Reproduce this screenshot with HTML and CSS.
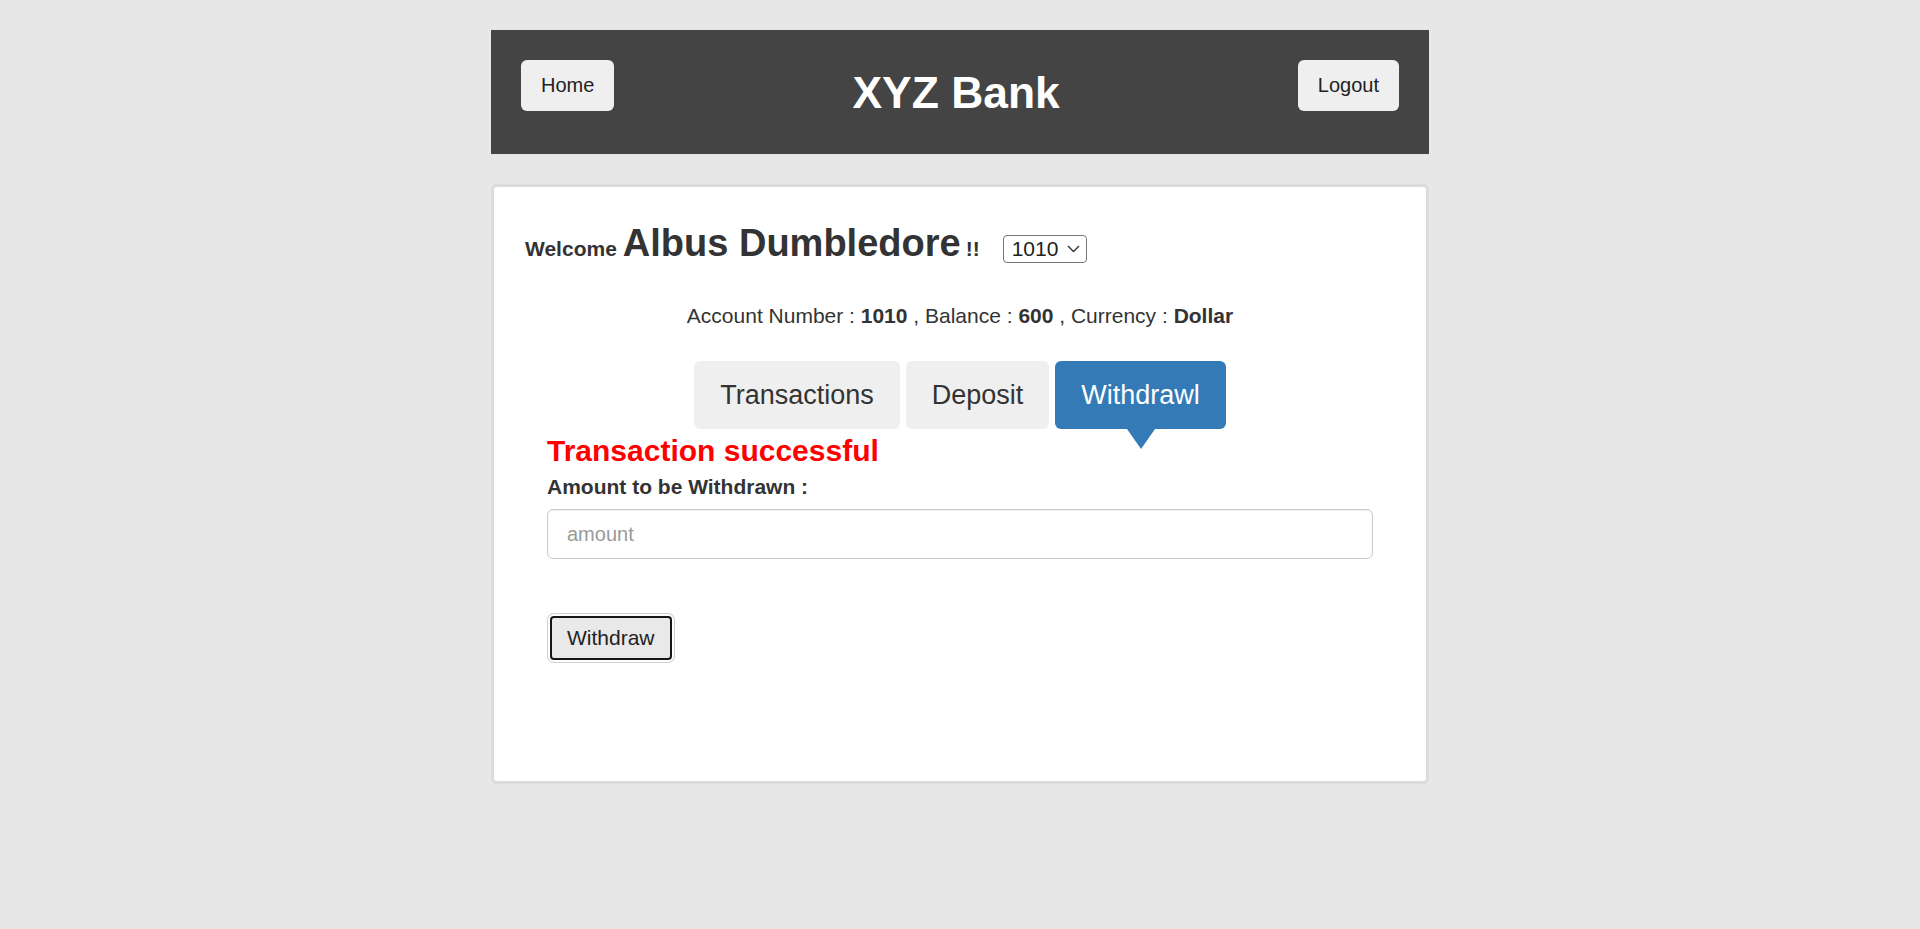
FILE: index.html
```html
<!DOCTYPE html>
<html lang="en">
<head>
<meta charset="utf-8">
<title>XYZ Bank</title>
<link rel="stylesheet" href="styles.css">
</head>
<body>
<div class="page">
  <header class="topbar">
    <button class="btn-light" type="button">Home</button>
    <h1 class="brand">XYZ Bank</h1>
    <button class="btn-light" type="button">Logout</button>
  </header>

  <main class="panel">
    <div class="welcome-row">
      <strong class="welcome">Welcome</strong>
      <strong class="name">Albus Dumbledore</strong>
      <strong class="bang">!!</strong>
      <span class="select-wrap">
        <select class="acct-select"><option>1010</option></select>
        <svg class="chev" width="13" height="8" viewBox="0 0 13 8"><path d="M1 1 L6.5 6.5 L12 1" fill="none" stroke="#333" stroke-width="1.4"/></svg>
      </span>
    </div>

    <div class="acct-info">Account Number : <strong>1010</strong> , Balance : <strong>600</strong> , Currency : <strong>Dollar</strong></div>

    <nav class="tabs">
      <button class="tab" type="button">Transactions</button>
      <button class="tab" type="button">Deposit</button>
      <button class="tab active" type="button">Withdrawl</button>
    </nav>

    <section class="tx">
      <p class="msg">Transaction successful</p>
      <form class="tx-form">
        <label class="tx-label">Amount to be Withdrawn :</label>
        <input class="tx-input" type="number" placeholder="amount">
        <button class="tx-submit" type="button">Withdraw</button>
      </form>
    </section>
  </main>
</div>
</body>
</html>
```

FILE: styles.css
```css
* { box-sizing: border-box; }

html, body {
  margin: 0;
  padding: 0;
  background: #e7e7e7;
  font-family: "Liberation Sans", Arial, sans-serif;
  color: #333;
}

.page {
  width: 938px;
  margin: 30px auto 0;
}

/* ---------- header ---------- */
.topbar {
  background: #444;
  height: 124px;
  padding: 30px 30px 0;
  display: flex;
  align-items: flex-start;
}

.btn-light {
  height: 51px;
  padding: 0 20px;
  border: none;
  border-radius: 6px;
  background: #efefef;
  color: #222;
  font-family: "Liberation Sans", Arial, sans-serif;
  font-size: 20px;
}

.brand {
  flex: 1;
  margin: 7px 0 0;
  text-align: center;
  color: #fff;
  font-size: 44.4px;
  font-weight: bold;
  line-height: 51px;
}

/* ---------- panel ---------- */
.panel {
  margin-top: 30px;
  height: 600px;
  background: #fff;
  border: 3px solid #dcdcdc;
  border-radius: 6px;
  padding: 35px 31px 0;
}

.welcome-row {
  display: flex;
  align-items: baseline;
  line-height: 43px;
}

.welcome {
  font-size: 21px;
  margin-right: 6px;
}

.name {
  font-size: 38px;
}

.bang {
  font-size: 21px;
  margin-left: 5px;
}

.select-wrap {
  position: relative;
  display: inline-flex;
  margin-left: 23px;
}

.acct-select {
  appearance: none;
  -webkit-appearance: none;
  width: 84px;
  height: 28px;
  padding: 0 0 0 8px;
  border: 1px solid #767676;
  border-radius: 4px;
  background: #fff;
  color: #222;
  font-family: "Liberation Sans", Arial, sans-serif;
  font-size: 21px;
  line-height: 26px;
}

.chev {
  position: absolute;
  right: 7px;
  top: 10px;
  pointer-events: none;
}

.acct-info {
  margin-top: 31px;
  text-align: center;
  font-size: 21px;
  line-height: 30px;
}

.tabs {
  margin-top: 30px;
  display: flex;
  justify-content: center;
  gap: 6px;
}

.tab {
  position: relative;
  padding: 15px 26px;
  border: none;
  border-radius: 6px;
  background: #efefef;
  color: #333;
  font-family: "Liberation Sans", Arial, sans-serif;
  font-size: 27px;
  line-height: 38px;
}

.tab.active {
  background: #337ab7;
  color: #fff;
}

.tab.active::after {
  content: "";
  position: absolute;
  left: 50%;
  top: 100%;
  margin-left: -14px;
  border-left: 14px solid transparent;
  border-right: 14px solid transparent;
  border-top: 20px solid #337ab7;
}

/* ---------- form ---------- */
.tx {
  margin: 0 22px;
}

.msg {
  margin: 5px 0 0;
  color: #f00;
  font-size: 30px;
  font-weight: bold;
  line-height: 33px;
}

.tx-form {
  display: flex;
  flex-direction: column;
  align-items: flex-start;
  margin-top: 5px;
}

.tx-label {
  font-size: 21px;
  font-weight: bold;
  line-height: 30px;
  margin-bottom: 7px;
}

.tx-input {
  width: 100%;
  height: 50px;
  padding: 0 19px;
  border: 1px solid #ccc;
  border-radius: 6px;
  box-shadow: inset 0 1px 1px rgba(0, 0, 0, 0.075);
  font-family: "Liberation Sans", Arial, sans-serif;
  font-size: 20px;
  color: #555;
  -moz-appearance: textfield;
}

.tx-input::placeholder { color: #999; }
.tx-input::-webkit-outer-spin-button,
.tx-input::-webkit-inner-spin-button { -webkit-appearance: none; margin: 0; }

.tx-submit {
  margin: 57px 0 0 3px;
  padding: 8px 15px;
  border: 2px solid #161616;
  border-radius: 4px;
  background: #e9e9e9;
  color: #222;
  font-family: "Liberation Sans", Arial, sans-serif;
  font-size: 21px;
  line-height: 24px;
  box-shadow: 0 0 0 2px #fff, 0 0 0 3px #cfcfcf;
}
```
